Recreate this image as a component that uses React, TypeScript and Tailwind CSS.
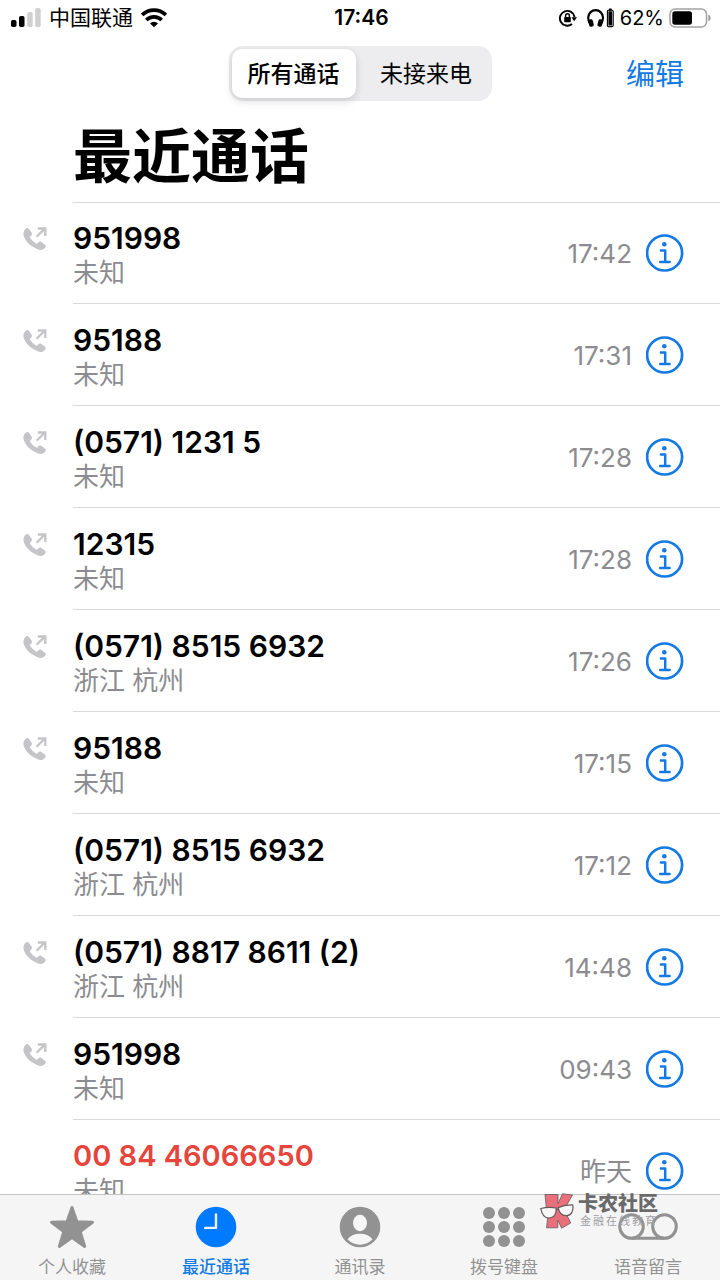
import { useState } from "react";
import { cva } from "class-variance-authority";
import clsx from "clsx";

interface Call {
  id: number;
  number: string;
  place: string;
  time: string;
  outgoing: boolean;
  missed?: boolean;
}

const calls: Call[] = [
  { id: 1, number: "951998", place: "未知", time: "17:42", outgoing: true },
  { id: 2, number: "95188", place: "未知", time: "17:31", outgoing: true },
  { id: 3, number: "(0571) 1231 5", place: "未知", time: "17:28", outgoing: true },
  { id: 4, number: "12315", place: "未知", time: "17:28", outgoing: true },
  { id: 5, number: "(0571) 8515 6932", place: "浙江 杭州", time: "17:26", outgoing: true },
  { id: 6, number: "95188", place: "未知", time: "17:15", outgoing: true },
  { id: 7, number: "(0571) 8515 6932", place: "浙江 杭州", time: "17:12", outgoing: false },
  { id: 8, number: "(0571) 8817 8611 (2)", place: "浙江 杭州", time: "14:48", outgoing: true },
  { id: 9, number: "951998", place: "未知", time: "09:43", outgoing: true },
  { id: 10, number: "00 84 46066650", place: "未知", time: "昨天", outgoing: false, missed: true },
];

const segment = cva("h-[49px] rounded-[10px] pt-[2px] text-[23px] leading-[47px] text-black", {
  variants: {
    active: {
      true: "w-[124px] bg-white font-medium shadow-[0_3px_8px_rgba(0,0,0,0.15)]",
      false: "w-[133px] pl-2",
    },
  },
});

function SignalIcon() {
  return (
    <svg width="30" height="20" viewBox="0 0 30 20" aria-hidden="true">
      <rect x="0" y="12" width="5.5" height="7" rx="1.8" />
      <rect x="8" y="8" width="5.5" height="11" rx="1.8" />
      <rect x="16.2" y="4" width="5.5" height="15" rx="1.8" fill="#d0d0d0" />
      <rect x="24.2" y="0" width="5.5" height="19" rx="1.8" fill="#d0d0d0" />
    </svg>
  );
}

function WifiIcon() {
  return (
    <svg width="26" height="20" viewBox="0 0 26 20" fill="none" stroke="#000" strokeWidth="3.6" aria-hidden="true">
      <path d="M1.2 6.9a17 17 0 0 1 23.6 0" />
      <path d="M5.3 12a11 11 0 0 1 15.4 0" />
      <path d="M13 19.3l-4-3.9a5.8 5.8 0 0 1 8 0z" fill="#000" stroke="none" />
    </svg>
  );
}

function LockIcon() {
  return (
    <svg width="18" height="18" viewBox="0 0 18 18" fill="none" stroke="#000" strokeWidth="1.9" aria-hidden="true">
      <path d="M13 15A7.4 7.4 0 1 1 15.6 8" />
      <path d="M12.4 8.2h5.600l-2.800 4z" fill="#000" stroke="none" />
      <rect x="5.200" y="8" width="6.600" height="5.200" rx="0.700" fill="#000" stroke="none" />
      <path d="M6.600 8V6.700a1.900 1.900 0 0 1 3.800 0V8" strokeWidth="1.400" />
    </svg>
  );
}

function HeadphonesIcon() {
  return (
    <svg width="27" height="20" viewBox="0 0 27 20" aria-hidden="true">
      <path d="M3 15.500C1.500 13.500 1.200 11.500 1.200 9.600a7.400 7.400 0 0 1 14.800 0c0 1.900-.3 3.900-1.800 5.900" fill="none" stroke="#000" strokeWidth="2.200" />
      <rect x="1.700" y="11.400" width="4.600" height="7.400" rx="1.800" transform="rotate(-14 3.900 15)" />
      <rect x="10.900" y="11.400" width="4.600" height="7.400" rx="1.800" transform="rotate(14 13.300 15)" />
      <rect x="21.800" y="0.400" width="3" height="2" rx="0.500" />
      <rect x="20.400" y="2.200" width="5.800" height="16.400" rx="1.200" fill="none" stroke="#000" strokeWidth="1.100" />
      <rect x="21.400" y="3.300" width="3.800" height="14.200" rx="0.400" />
    </svg>
  );
}

function BatteryIcon() {
  return (
    <svg width="43" height="20" viewBox="0 0 43 20" aria-hidden="true">
      <rect x="1" y="1" width="36.5" height="18" rx="5" fill="none" stroke="#a3a3a3" strokeWidth="1.5" />
      <rect x="3.3" y="3.3" width="19.7" height="13.4" rx="2.6" />
      <path d="M39.3 6.8c3 .8 3 5.6 0 6.4z" fill="#999" />
    </svg>
  );
}

function OutgoingIcon() {
  return (
    <svg width="24" height="24" viewBox="0 0 24 24" fill="#c5c5c7" aria-label="呼出" role="img">
      <path d="M1.2 3.5C2.3 1.9 3.5.9 4.5 1c.8.1 1.4.8 2.1 1.8l1.9 2.7c.8 1.2.6 2.1-.3 3L7.2 9.500c-.4.400-.4.700-.1 1.200 1.600 2.400 3.500 4.200 6 5.800.5.300.9.300 1.200-.1l1.100-1.100c.9-.9 1.800-1.100 3-.3l2.700 1.900c1 .7 1.600 1.300 1.700 2.100.1 1-.9 2.200-2.500 3.300-1.800 1.100-4.900.6-8.200-1.300C7.300 18.700 4.300 15.600 2.100 11.900.1 8.500 0 5.400 1.200 3.500z" />
      <path d="M13.600 9.800l8.200-8.200M14.800 1.500h7.500v7.500" fill="none" stroke="#c5c5c7" strokeWidth="2.300" />
    </svg>
  );
}

function InfoIcon() {
  return (
    <svg width="38" height="38" viewBox="0 0 38 38" fill="none" stroke="#127ae4" aria-hidden="true">
      <circle cx="18.6" cy="19" r="17.5" strokeWidth="2.7" />
      <circle cx="18.3" cy="10.2" r="2.3" fill="#127ae4" stroke="none" />
      <path d="M14.9 16.4h4.3v11.4M14.2 28h9.4" strokeWidth="2.500" strokeLinecap="round" strokeLinejoin="round" />
    </svg>
  );
}

function StarIcon() {
  return (
    <svg width="46" height="44" viewBox="0 0 46 44" fill="#929292" stroke="#929292" strokeWidth="3" strokeLinejoin="round" aria-hidden="true">
      <path d="M23 2.5l4.9 14.3 15.6.5-12.3 9.3 4.5 14.8L23 32.6l-12.7 8.8 4.5-14.8L2.5 17.300l15.600-.5z" />
    </svg>
  );
}

function ClockIcon() {
  return (
    <svg width="42" height="42" viewBox="0 0 42 42" aria-hidden="true">
      <circle cx="21" cy="21" r="20.3" fill="#007aff" />
      <path d="M21 8.5v13.4H10.2" fill="none" stroke="#f2f2f4" strokeWidth="2.4" strokeLinecap="round" strokeLinejoin="round" />
    </svg>
  );
}

function ContactIcon() {
  return (
    <svg width="42" height="42" viewBox="0 0 42 42" aria-hidden="true">
      <circle cx="21" cy="21" r="20.3" fill="#929292" />
      <ellipse cx="21" cy="17" rx="7" ry="8.2" fill="#f6f6f7" />
      <path d="M8.5 33.2c3-3.8 7.3-5.4 12.5-5.4s9.500 1.600 12.500 5.400A17.600 17.600 0 0 1 21 38.700a17.600 17.600 0 0 1-12.500-5.500z" fill="#f6f6f7" />
    </svg>
  );
}

function KeypadIcon() {
  return (
    <svg width="42" height="42" viewBox="0 0 42 42" fill="#929292" aria-hidden="true">
      {[7, 21, 35].map((y) =>
        [6, 21, 36].map((x) => <circle key={`${x}-${y}`} cx={x} cy={y} r="6" />)
      )}
    </svg>
  );
}

function VoicemailIcon() {
  return (
    <svg width="60" height="42" viewBox="0 0 60 42" fill="none" stroke="#929292" strokeWidth="3" aria-hidden="true">
      <circle cx="13.5" cy="20.5" r="11.8" />
      <circle cx="46.5" cy="20.5" r="11.8" />
      <path d="M13.5 32.300h33" />
    </svg>
  );
}

function BrandIcon() {
  return (
    <svg width="34" height="36" viewBox="0 0 34 36" stroke="#66595b" strokeWidth="0.8" aria-hidden="true">
      <path d="M5 1.500h13v9L22.500.8l10 1.200-8.300 14.500 6.500 13.500-9.100 5.200-3.800-8v7.600H6.500l1-8z" fill="#e9707a" />
      <path d="M.8 15.500c4-1 10.500-1.400 15.300-.5.600 6-2.200 10-7 10-4.900 0-7.400-4-8.300-9.500z" fill="#f8f8f8" strokeWidth="1.200" />
      <path d="M18.200 14.600c4-1.800 9.800-2.800 14.600-2.600.8 6-1.300 10.200-6 10.600-4.600.4-7.600-2.800-8.600-8z" fill="#f8f8f8" strokeWidth="1.200" />
      <path d="M16 16.500l2.400-.5" strokeWidth="1.200" />
    </svg>
  );
}

const tabs = [
  { id: "favorites", label: "个人收藏", icon: <StarIcon /> },
  { id: "recents", label: "最近通话", icon: <ClockIcon /> },
  { id: "contacts", label: "通讯录", icon: <ContactIcon /> },
  { id: "keypad", label: "拨号键盘", icon: <KeypadIcon /> },
  { id: "voicemail", label: "语音留言", icon: <VoicemailIcon /> },
];

function CallRow({ call }: { call: Call }) {
  return (
    <li className="flex h-[102px]">
      <div className="w-[73px] shrink-0 pt-[25px] pl-[23px]">{call.outgoing && <OutgoingIcon />}</div>
      <div className="flex min-w-0 flex-1 border-b border-[#d9d9db] pr-9">
        <div className="min-w-0 flex-1 pt-[18px]">
          <p className={clsx("truncate leading-9 font-semibold", call.missed ? "text-[29px] text-[#e5453b]" : "text-[30px] text-black")}>
            {call.number}
          </p>
          <p className="text-[26px] leading-[34px] text-[#8c8c90]">{call.place}</p>
        </div>
        <div className="flex items-center gap-[14px]">
          <time className="pt-[2px] text-[26px] text-[#8c8c90]">{call.time}</time>
          <button type="button" aria-label={`${call.number} 详情`}>
            <InfoIcon />
          </button>
        </div>
      </div>
    </li>
  );
}

export default function App() {
  const [filter, setFilter] = useState<"all" | "missed">("all");
  const [tab, setTab] = useState("recents");

  const visible = filter === "all" ? calls : calls.filter((c) => c.missed);

  return (
    <div className="flex h-screen flex-col overflow-hidden bg-white font-['Inter','Noto_Sans_CJK_SC',sans-serif] text-black">
      <div className="grid h-9 shrink-0 grid-cols-[1fr_auto_1fr] items-center pr-2 pl-[11px]">
        <div className="flex items-center gap-2">
          <SignalIcon />
          <span className="text-[21px] leading-8">中国联通</span>
          <WifiIcon />
        </div>
        <span className="text-[21px] leading-8 font-semibold">17:46</span>
        <div className="flex items-center justify-end">
          <LockIcon />
          <span className="ml-[10px]">
            <HeadphonesIcon />
          </span>
          <span className="ml-[6px] text-[20px] leading-8">62%</span>
          <span className="ml-[5px]">
            <BatteryIcon />
          </span>
        </div>
      </div>

      <header className="shrink-0">
        <div className="grid grid-cols-[1fr_auto_1fr] items-center px-9 pt-[10px]">
          <div className="col-start-2 flex rounded-[14px] bg-[#ededf0] p-[3px]">
            <button type="button" className={segment({ active: filter === "all" })} onClick={() => setFilter("all")}>
              所有通话
            </button>
            <button type="button" className={segment({ active: filter === "missed" })} onClick={() => setFilter("missed")}>
              未接来电
            </button>
          </div>
          <button type="button" className="justify-self-end pt-[2px] text-[29px] leading-10 text-[#127ae4]">
            编辑
          </button>
        </div>
        <h1 className="ml-[73px] h-[102px] border-b border-[#d9d9db] pt-[14px] text-[59px] leading-[84px] font-bold">最近通话</h1>
      </header>

      <ul className="-mt-px min-h-0 flex-1 overflow-hidden">
        {visible.map((call) => (
          <CallRow key={call.id} call={call} />
        ))}
      </ul>

      <nav className="relative grid shrink-0 grid-cols-5 border-t border-[#c4c4c6] bg-[#f5f5f6] pt-[11px]">
        {tabs.map((t) => (
          <a
            key={t.id}
            href={`#${t.id}`}
            onClick={() => setTab(t.id)}
            className={clsx("flex flex-col items-center", tab === t.id ? "font-medium text-[#127ae4]" : "text-[#929292]")}
          >
            <span className="flex h-[42px] items-center">{t.icon}</span>
            <span className="mt-[6px] text-[17px] leading-[26px]">{t.label}</span>
          </a>
        ))}
        <div className="pointer-events-none absolute -top-[2px] right-[62px] flex gap-1">
          <BrandIcon />
          <div>
            <p className="text-[20px] leading-[22px] font-black text-[#6a6a6c]">卡农社区</p>
            <p className="pl-[2px] text-[11px] leading-[13px] tracking-[2px] text-[#a0a0a2]">金融在线教育</p>
          </div>
        </div>
      </nav>
    </div>
  );
}
